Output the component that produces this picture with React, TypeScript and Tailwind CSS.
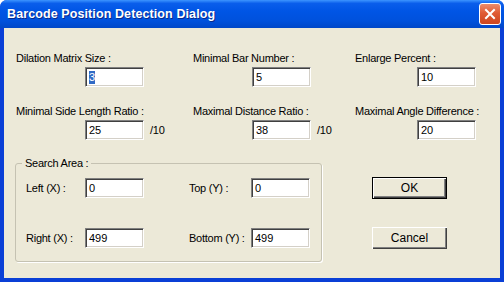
import React from 'react';

const font = "font-['Liberation_Sans',Arial,sans-serif]";
const lbl = 'text-[11px] tracking-[-0.25px] whitespace-nowrap';

const Field: React.FC<{ value: string; selected?: boolean; className?: string }> = ({ value, selected, className }) => (
  <div
    className={`h-[20px] bg-white border border-t-[#808080] border-l-[#808080] border-b-white border-r-white shadow-[inset_1px_1px_0_#404040,inset_-1px_-1px_0_#d4d0c8] flex items-center pl-[3px] text-[11px] text-black ${className ?? ''}`}
  >
    {selected ? <span className="bg-[#316AC5] text-white leading-[13px]">{value}</span> : <span>{value}</span>}
  </div>
);

const Labeled: React.FC<{ label: string; value: string; indent: string; selected?: boolean; suffix?: string }> = ({ label, value, indent, selected, suffix }) => (
  <div className="flex flex-col">
    <div className={`h-[13px] leading-[13px] ${lbl}`}>{label}</div>
    <div className={`flex items-center mt-[2px] ${indent}`}>
      <Field value={value} selected={selected} className="w-[59px]" />
      {suffix && <span className={`ml-[6px] ${lbl}`}>{suffix}</span>}
    </div>
  </div>
);

const InlineField: React.FC<{ label: string; value: string; labelW: string }> = ({ label, value, labelW }) => (
  <div className="flex items-center">
    <span className={`${labelW} ${lbl}`}>{label}</span>
    <Field value={value} className="w-[59px]" />
  </div>
);

const App: React.FC = () => {
  return (
    <div className={`w-[504px] h-[282px] flex flex-col bg-[#0A3FD6] rounded-t-[7px] overflow-hidden ${font}`}>
      {/* title bar */}
      <div className="h-[28px] shrink-0 flex items-center justify-between pl-[7px] pr-[3px] bg-[linear-gradient(180deg,#3D95FF_0%,#0A5EEB_12%,#0055E5_40%,#0051DC_75%,#0047C8_100%)]">
        <span className="text-white font-bold text-[12.5px] tracking-[0.1px] [text-shadow:1px_1px_0_#0A2A8A]">
          Barcode Position Detection Dialog
        </span>
        <div className="w-[22px] h-[22px] rounded-[3px] border border-white bg-[linear-gradient(180deg,#EC8C6C_0%,#E05B34_45%,#CC451F_100%)] flex items-center justify-center">
          <svg width="12" height="12" viewBox="0 0 12 12">
            <path d="M2 2 L10 10 M10 2 L2 10" stroke="white" strokeWidth="2" strokeLinecap="square" />
          </svg>
        </div>
      </div>

      {/* client area */}
      <div className="flex-1 mx-[4px] mb-[4px] bg-[#ECE9D8] text-black">
        <div className="flex pl-[12px] pt-[24px]">
          <div className="w-[177px] flex flex-col gap-[18px]">
            <Labeled label="Dilation Matrix Size :" value="3" selected indent="ml-[69px]" />
            <Labeled label="Minimal Side Length Ratio :" value="25" indent="ml-[69px]" suffix="/10" />
          </div>
          <div className="w-[162px] flex flex-col gap-[18px]">
            <Labeled label="Minimal Bar Number :" value="5" indent="ml-[59px]" />
            <Labeled label="Maximal Distance Ratio :" value="38" indent="ml-[59px]" suffix="/10" />
          </div>
          <div className="flex flex-col gap-[18px]">
            <Labeled label="Enlarge Percent :" value="10" indent="ml-[62px]" />
            <Labeled label="Maximal Angle Difference :" value="20" indent="ml-[62px]" />
          </div>
        </div>

        <div className="flex mt-[23px] pl-[11px]">
          <div className="relative w-[307px] h-[99px] border border-[#C5C2B2] rounded-[3px] shadow-[1px_1px_0_#fff]">
            <span className={`absolute -top-[7px] left-[6px] px-[3px] bg-[#ECE9D8] leading-[13px] ${lbl}`}>Search Area :</span>
            <div className="grid grid-cols-[163px_1fr] gap-y-[30px] pl-[10px] pt-[14px]">
              <InlineField label="Left (X) :" value="0" labelW="w-[59px]" />
              <InlineField label="Top (Y) :" value="0" labelW="w-[62px]" />
              <InlineField label="Right (X) :" value="499" labelW="w-[59px]" />
              <InlineField label="Bottom (Y) :" value="499" labelW="w-[62px]" />
            </div>
          </div>

          <div className="flex flex-col ml-[50px] pt-[14px] gap-[28px]">
            <button className="w-[75px] h-[22px] border border-black bg-[#ECE9D8] shadow-[inset_1px_1px_0_#fff,inset_-1px_-1px_0_#404040,inset_-2px_-2px_0_#808080] text-[12px] leading-none">
              OK
            </button>
            <button className="w-[75px] h-[22px] bg-[#ECE9D8] shadow-[inset_1px_1px_0_#fff,inset_-1px_-1px_0_#404040,inset_-2px_-2px_0_#808080] text-[12px] leading-none">
              Cancel
            </button>
          </div>
        </div>
      </div>
    </div>
  );
};

export default App;
